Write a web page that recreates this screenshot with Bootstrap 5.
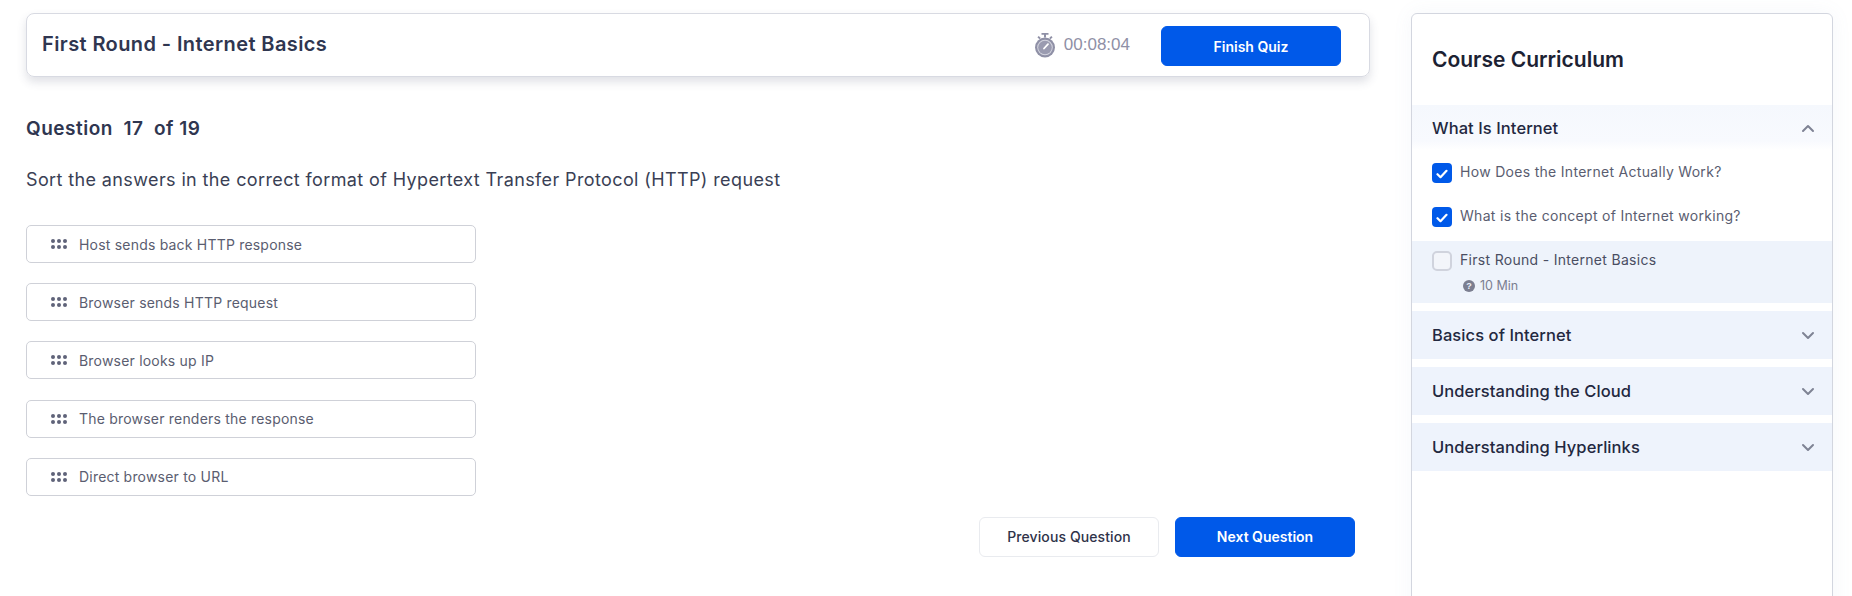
<!DOCTYPE html>
<html lang="en">
<head>
<meta charset="utf-8">
<title>Quiz</title>
<link href="https://cdn.jsdelivr.net/npm/bootstrap@5.3.0/dist/css/bootstrap.min.css" rel="stylesheet">
<style>
html,body{height:596px;overflow:hidden;background:#fff}
body{font-family:Inter,"Liberation Sans",sans-serif;color:#2f3349}
.shell{padding:13px 20px 0 26px;height:596px;overflow:hidden}
.main-col{width:1344px;flex:none}
.side-col{width:422px;flex:none;margin-left:41px;height:640px;border:1px solid #d3d6df;border-radius:6px;box-shadow:0 0 20px rgba(120,140,190,.07);background:#fff}
.quiz-head{height:64px;border:1px solid #d8dae2;border-radius:8px;padding:0 28px 0 15px;box-shadow:0 5px 10px rgba(60,70,100,.16)}
.quiz-title{font-size:20px;font-weight:600;color:#2f3650;margin:0 0 2px;letter-spacing:.4px}
.clock-wrap{color:#8f90a6;font-family:"Liberation Sans",sans-serif;font-size:17px;gap:9px;margin-right:7px}
.btn-brand{background:#0059e9;border:1px solid #0059e9;color:#fff;font-weight:600;font-size:14px;width:180px;height:40px;border-radius:6px;display:flex;align-items:center;justify-content:center}
.btn-finish{margin-top:2px}
.btn-plain{background:#fff;border:1px solid #e9ebef;color:#2f3349;font-weight:500;font-size:14px;letter-spacing:.1px;width:180px;height:40px;border-radius:6px;display:flex;align-items:center;justify-content:center}
.q-count{font-size:19px;font-weight:600;color:#2f3650;margin:38px 0 0;line-height:28px;letter-spacing:.5px}
.q-text{font-size:18px;font-weight:400;color:#3a3f55;margin:23px 0 0;line-height:28px;letter-spacing:.38px}
.sort-list{margin-top:31px;display:flex;flex-direction:column;gap:20.2px;width:450px}
.sort-item{height:38px;border:1px solid #cfd1d8;border-radius:5px;padding-left:24px;display:flex;align-items:center;gap:12px;font-size:14px;letter-spacing:.2px;color:#5a5d70}
.dots{width:16px;height:10px;flex:none;display:block;fill:#5f6379}
.foot-btns{margin-top:21px;padding-right:15px;gap:16px}
.side-title{font-size:21px;font-weight:600;color:#1c2233;margin:0;padding:32px 20px 0;line-height:28px}
.acc-head{height:48px;padding:0 17px 0 20px;display:flex;align-items:center;justify-content:space-between;background:#eef3fc;font-size:16.5px;font-weight:500;letter-spacing:.08px;color:#232840}
.acc-open{margin-top:31px;height:45px;padding-top:1px;background:linear-gradient(#f5f8fd,#f8fafe 80%,#fff)}
.acc-next{margin-top:8px}
.chev{width:14px;height:9px;stroke:#7f8394;fill:none;stroke-width:2;stroke-linecap:round;stroke-linejoin:round}
.les{display:flex;gap:8px;padding:0 20px;font-size:14px;letter-spacing:.3px;color:#5a5d70;line-height:17px}
.les-1{margin-top:13px}
.les-2{margin-top:24px}
.les-cur{margin-top:14px;background:#eef3fb;height:62px;padding-top:10px;display:block;color:#4a4e62}
.box{width:20px;height:20px;flex:none;border-radius:4px;background:#0059e9;display:flex;align-items:center;justify-content:center}
.box svg{width:12px;height:10px;margin-top:1px;fill:none;stroke:#fff;stroke-width:2.2;stroke-linecap:round;stroke-linejoin:round}
.box-off{background:#f3f5fa;border:2px solid #d0d3dd;border-radius:5px}
.les-meta{font-size:12.5px;letter-spacing:0;color:#7b7e90;margin:6px 0 0 31px;display:flex;align-items:center;gap:5px;line-height:18px}
.les-meta svg{width:12px;height:12px}
</style>
</head>
<body>
<div class="shell d-flex align-items-start">
  <div class="main-col">
    <div class="quiz-head d-flex align-items-center justify-content-between">
      <h1 class="quiz-title">First Round - Internet Basics</h1>
      <div class="d-flex align-items-center gap-4">
        <div class="clock-wrap d-flex align-items-center">
          <svg width="20" height="25" viewBox="0 0 20 25" aria-hidden="true">
            <path fill="#8f90a6" d="M6.500 0h7v1.800h-2.500v2.700h-2V1.800H6.500z"/>
            <path fill="#8f90a6" d="M2.400 4.200l1.400-1.300 2 2.100-1.400 1.300zM17.600 4.200l-1.400-1.300-2 2.100 1.400 1.300z"/>
            <circle cx="10" cy="14.500" r="10" fill="#8f90a6"/>
            <circle cx="10" cy="14.500" r="7.800" fill="#d3d4de"/>
            <circle cx="10" cy="14.500" r="6.800" fill="#9a9bb0"/>
            <path d="M9 15.500l4-4.400" stroke="#fff" stroke-width="1.800" stroke-linecap="round"/>
          </svg>
          <span>00:08:04</span>
        </div>
        <button type="button" class="btn-brand btn-finish">Finish Quiz</button>
      </div>
    </div>
    <h2 class="q-count">Question&nbsp; 17&nbsp; of 19</h2>
    <p class="q-text">Sort the answers in the correct format of Hypertext Transfer Protocol (HTTP) request</p>
    <div class="sort-list">
      <div class="sort-item"><svg class="dots" viewBox="0 0 16 10"><circle cx="2" cy="2" r="2"/><circle cx="8" cy="2" r="2"/><circle cx="14" cy="2" r="2"/><circle cx="2" cy="8" r="2"/><circle cx="8" cy="8" r="2"/><circle cx="14" cy="8" r="2"/></svg>Host sends back HTTP response</div>
      <div class="sort-item"><svg class="dots" viewBox="0 0 16 10"><circle cx="2" cy="2" r="2"/><circle cx="8" cy="2" r="2"/><circle cx="14" cy="2" r="2"/><circle cx="2" cy="8" r="2"/><circle cx="8" cy="8" r="2"/><circle cx="14" cy="8" r="2"/></svg>Browser sends HTTP request</div>
      <div class="sort-item"><svg class="dots" viewBox="0 0 16 10"><circle cx="2" cy="2" r="2"/><circle cx="8" cy="2" r="2"/><circle cx="14" cy="2" r="2"/><circle cx="2" cy="8" r="2"/><circle cx="8" cy="8" r="2"/><circle cx="14" cy="8" r="2"/></svg>Browser looks up IP</div>
      <div class="sort-item"><svg class="dots" viewBox="0 0 16 10"><circle cx="2" cy="2" r="2"/><circle cx="8" cy="2" r="2"/><circle cx="14" cy="2" r="2"/><circle cx="2" cy="8" r="2"/><circle cx="8" cy="8" r="2"/><circle cx="14" cy="8" r="2"/></svg>The browser renders the response</div>
      <div class="sort-item"><svg class="dots" viewBox="0 0 16 10"><circle cx="2" cy="2" r="2"/><circle cx="8" cy="2" r="2"/><circle cx="14" cy="2" r="2"/><circle cx="2" cy="8" r="2"/><circle cx="8" cy="8" r="2"/><circle cx="14" cy="8" r="2"/></svg>Direct browser to URL</div>
    </div>
    <div class="foot-btns d-flex justify-content-end">
      <button type="button" class="btn-plain">Previous Question</button>
      <button type="button" class="btn-brand">Next Question</button>
    </div>
  </div>
  <aside class="side-col">
    <h3 class="side-title">Course Curriculum</h3>
    <div class="acc-head acc-open">What Is Internet<svg class="chev" viewBox="0 0 14 9"><path d="M2 7l5-5 5 5"/></svg></div>
    <div class="les les-1"><span class="box"><svg viewBox="0 0 12 10"><path d="M1.500 5.200l3 3 6-6.400"/></svg></span><span>How Does the Internet Actually Work?</span></div>
    <div class="les les-2"><span class="box"><svg viewBox="0 0 12 10"><path d="M1.500 5.200l3 3 6-6.400"/></svg></span><span>What is the concept of Internet working?</span></div>
    <div class="les les-cur">
      <div class="d-flex gap-2"><span class="box box-off"></span><span>First Round - Internet Basics</span></div>
      <div class="les-meta"><svg viewBox="0 0 12 12"><circle cx="6" cy="6" r="6" fill="#7b7e90"/><text x="6" y="9.200" text-anchor="middle" font-size="9" font-weight="700" fill="#eef3fb" font-family="Liberation Sans">?</text></svg>10 Min</div>
    </div>
    <div class="acc-head acc-next">Basics of Internet<svg class="chev" viewBox="0 0 14 9"><path d="M2 2l5 5 5-5"/></svg></div>
    <div class="acc-head acc-next">Understanding the Cloud<svg class="chev" viewBox="0 0 14 9"><path d="M2 2l5 5 5-5"/></svg></div>
    <div class="acc-head acc-next">Understanding Hyperlinks<svg class="chev" viewBox="0 0 14 9"><path d="M2 2l5 5 5-5"/></svg></div>
  </aside>
</div>
<script src="https://cdn.jsdelivr.net/npm/bootstrap@5.3.0/dist/js/bootstrap.bundle.min.js"></script>
</body>
</html>
